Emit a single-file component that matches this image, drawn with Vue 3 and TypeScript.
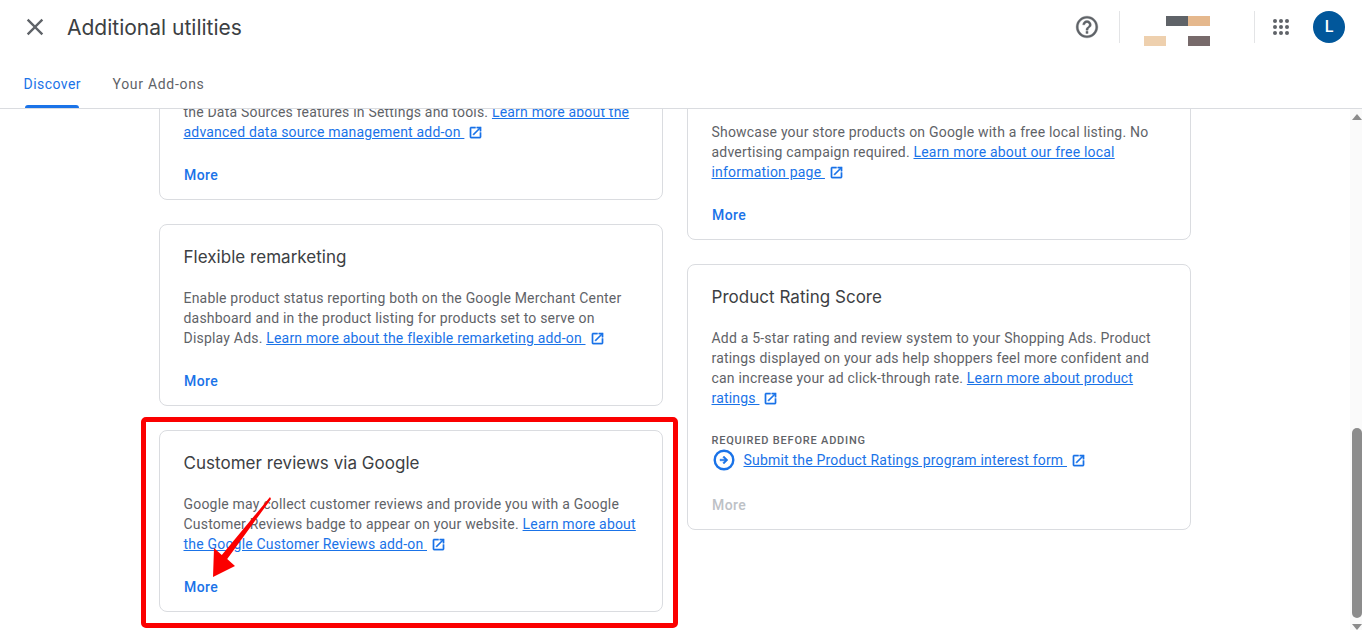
<script setup lang="ts">
const open = "M19 19H5V5h7V3H5a2 2 0 0 0-2 2v14a2 2 0 0 0 2 2h14c1.1 0 2-.9 2-2v-7h-2v7zM14 3v2h3.59l-9.83 9.83 1.41 1.41L19 6.41V10h2V3h-7z";
const dots: number[][] = [6, 12, 18].flatMap((y) => [6, 12, 18].map((x) => [x, y]));
</script>

<template>
  <div class="app">
    <header class="head">
      <div class="top">
        <svg class="close" viewBox="0 0 24 24"><path d="M19 6.41L17.59 5 12 10.59 6.41 5 5 6.41 10.59 12 5 17.59 6.41 19 12 13.41 17.59 19 19 17.59 13.41 12z" /></svg>
        <h1 class="page-title">Additional utilities</h1>
        <div class="actions">
          <svg class="ico help" viewBox="0 0 24 24"><path d="M11 18h2v-2h-2v2zm1-16C6.48 2 2 6.48 2 12s4.48 10 10 10 10-4.48 10-10S17.52 2 12 2zm0 18c-4.41 0-8-3.59-8-8s3.59-8 8-8 8 3.59 8 8-3.59 8-8 8zm0-14c-2.21 0-4 1.79-4 4h2c0-1.1.9-2 2-2s2 .9 2 2c0 2-3 1.75-3 5h2c0-2.25 3-2.5 3-5 0-2.21-1.79-4-4-4z" /></svg>
          <span class="divider d1"></span>
          <div class="blocks">
            <span></span><span class="b1"></span><span class="b2"></span>
            <span class="b3"></span><span></span><span class="b4"></span>
          </div>
          <span class="divider d2"></span>
          <svg class="ico apps" viewBox="0 0 24 24"><circle v-for="d in dots" :key="d.join()" :cx="d[0]" :cy="d[1]" r="2" /></svg>
          <div class="avatar">L</div>
        </div>
      </div>
      <nav class="tabs">
        <span class="tab active">Discover</span>
        <span class="tab second">Your Add-ons</span>
      </nav>
    </header>

    <div class="body">
      <main class="main">
        <div class="col">
          <section class="card first-left">
            <p>the Data Sources features in Settings and tools. <a>Learn more about the<br />advanced data source management add-on </a><svg class="ext" viewBox="0 0 24 24"><path :d="open" /></svg></p>
            <button class="more">More</button>
          </section>
          <section class="card">
            <h2>Flexible remarketing</h2>
            <p>Enable product status reporting both on the Google Merchant Center<br />dashboard and in the product listing for products set to serve on<br />Display Ads. <a>Learn more about the flexible remarketing add-on </a><svg class="ext" viewBox="0 0 24 24"><path :d="open" /></svg></p>
            <button class="more">More</button>
          </section>
          <section class="card">
            <h2>Customer reviews via Google</h2>
            <p>Google may collect customer reviews and provide you with a Google<br />Customer Reviews badge to appear on your website. <a>Learn more about<br />the Google Customer Reviews add-on </a><svg class="ext" viewBox="0 0 24 24"><path :d="open" /></svg></p>
            <button class="more">More</button>
          </section>
        </div>
        <div class="col">
          <section class="card first-right">
            <p>Showcase your store products on Google with a free local listing. No<br />advertising campaign required. <a>Learn more about our free local<br />information page </a><svg class="ext" viewBox="0 0 24 24"><path :d="open" /></svg></p>
            <button class="more">More</button>
          </section>
          <section class="card">
            <h2>Product Rating Score</h2>
            <p>Add a 5-star rating and review system to your Shopping Ads. Product<br />ratings displayed on your ads help shoppers feel more confident and<br />can increase your ad click-through rate. <a>Learn more about product<br />ratings </a><svg class="ext" viewBox="0 0 24 24"><path :d="open" /></svg></p>
            <div class="req-label">REQUIRED BEFORE ADDING</div>
            <div class="req-row">
              <svg class="req-ico" viewBox="0 0 24 24"><circle cx="12" cy="12" r="9.3" fill="none" stroke="#1a73e8" stroke-width="2.4" /><path d="M12 8l-1.2 1.2 1.95 1.95H8v1.7h4.75L10.8 14.8 12 16l4-4z" fill="#1a73e8" stroke="#1a73e8" stroke-width=".4" /></svg>
              <p><a>Submit the Product Ratings program interest form </a><svg class="ext" viewBox="0 0 24 24"><path :d="open" /></svg></p>
            </div>
            <button class="more disabled">More</button>
          </section>
        </div>
      </main>
      <aside class="scrollbar">
        <span class="arrow up"></span>
        <span class="thumb"></span>
        <span class="arrow down"></span>
      </aside>
    </div>

    <div class="frame"></div>
    <svg class="pointer" width="1362" height="630" viewBox="0 0 1362 630"><polygon points="270,497 271,499 227.2,559 235,566 213,577 214,548 221.8,555" fill="#fb0000" /></svg>
  </div>
</template>

<style>
html, body { margin: 0; background: #fff; overflow: hidden; }
</style>

<style scoped>
.app {
  position: relative;
  width: 1362px;
  height: 630px;
  overflow: hidden;
  display: flex;
  flex-direction: column;
  font-family: Roboto, "Liberation Sans", sans-serif;
  background: #fff;
}
.head {
  position: relative;
  z-index: 2;
  flex: none;
  background: #fff;
  border-bottom: 1px solid #dadce0;
}
.top {
  height: 54px;
  display: flex;
  align-items: center;
  padding: 0 17px 0 21px;
}
.close { width: 28px; height: 28px; fill: #5f6368; }
.page-title {
  margin: 0 0 0 18px;
  font-family: Inter, Roboto, sans-serif;
  font-size: 21px;
  font-weight: 400;
  color: #3c4043;
}
.actions { margin-left: auto; display: flex; align-items: center; }
.ico { width: 24px; height: 24px; fill: #5f6368; flex: none; }
.help { width: 26px; height: 26px; margin: 0 -1px; stroke: #5f6368; stroke-width: 0.3; }
.divider { width: 1px; height: 32px; background: #e3e4e6; flex: none; }
.d1 { margin: 0 24px 0 20px; }
.d2 { margin: 0 14px 0 44px; }
.blocks {
  display: grid;
  grid-template-columns: repeat(3, 22px);
  grid-template-rows: 10px 10px;
  row-gap: 10px;
  margin-top: 8px;
}
.b1 { background: #5f6368; }
.b2 { background: #e5b88d; }
.b3 { background: #eed0ae; }
.b4 { background: #776a6b; }
.avatar {
  width: 32px;
  height: 32px;
  margin-left: 20px;
  border-radius: 50%;
  background: #01579b;
  color: #fff;
  font-size: 16px;
  font-weight: 500;
  line-height: 32px;
  text-align: center;
}
.tabs { height: 54px; display: flex; gap: 31.5px; padding-left: 23.5px; }
.tab {
  position: relative;
  padding-top: 20px;
  font-size: 14px;
  line-height: 20px;
  letter-spacing: 0.45px;
  color: #5f6368;
}
.tab.second { letter-spacing: 0.7px; }
.tab.active { color: #1a73e8; }
.tab.active::after {
  content: "";
  position: absolute;
  left: 1.5px;
  right: 2px;
  bottom: 0;
  height: 3px;
  border-radius: 3px 3px 0 0;
  background: #1a73e8;
}
.body { flex: 1; min-height: 0; display: flex; overflow: hidden; }
.main {
  flex: 1;
  display: flex;
  justify-content: center;
  align-items: flex-start;
  gap: 24px;
}
.col { width: 504px; display: flex; flex-direction: column; gap: 24px; }
.card {
  box-sizing: border-box;
  padding: 20px 24px 14px 23.5px;
  background: #fff;
  border: 1px solid #dadce0;
  border-radius: 8px;
}
.first-left { margin-top: -31px; padding-top: 23px; }
.first-right { margin-top: -21px; padding-top: 33px; }
h2 {
  margin: 0 0 19px;
  font-family: Inter, Roboto, sans-serif;
  font-size: 17px;
  font-weight: 400;
  line-height: 24px;
  letter-spacing: 0.03px;
  color: #3c4043;
}
p {
  margin: 0;
  font-size: 14px;
  line-height: 20px;
  letter-spacing: 0.2px;
  color: #5f6368;
  white-space: nowrap;
}
a { color: #1a73e8; text-decoration: underline; white-space: pre; }
.ext {
  width: 15px;
  height: 15px;
  margin-left: 4px;
  vertical-align: -3px;
  fill: #1a73e8;
  stroke: #1a73e8;
  stroke-width: 0.7;
}
.more {
  display: block;
  margin: 23px 0 0 0.5px;
  padding: 0;
  border: 0;
  background: none;
  font: 500 14px/20px Roboto, sans-serif;
  letter-spacing: 0.4px;
  color: #1a73e8;
}
.more.disabled { margin-top: 25px; color: #bdc1c6; }
.req-label {
  margin-top: 25px;
  font-size: 11px;
  font-weight: 500;
  line-height: 16px;
  letter-spacing: 0.8px;
  color: #5f6368;
}
.req-row { margin-top: 1px; height: 20px; display: flex; align-items: center; gap: 8px; }
.req-ico { width: 24px; height: 24px; flex: none; }
.scrollbar {
  flex: none;
  width: 12px;
  display: flex;
  flex-direction: column;
  align-items: flex-start;
  background: #fafafa;
}
.arrow {
  width: 0;
  height: 0;
  margin-left: 2px;
  border-left: 5px solid transparent;
  border-right: 5px solid transparent;
}
.up { margin-top: 5px; border-bottom: 6px solid #8c8c8c; }
.down { margin-top: 6px; border-top: 6px solid #8c8c8c; }
.thumb {
  width: 10px;
  height: 190px;
  margin: 308px 0 0 2px;
  border-radius: 5px;
  background: #8c8c8c;
}
.frame {
  position: absolute;
  left: 141px;
  top: 417px;
  width: 537px;
  height: 211px;
  box-sizing: border-box;
  border: 5px solid #fb0000;
  border-radius: 5px;
}
.pointer { position: absolute; left: 0; top: 0; pointer-events: none; }
</style>
